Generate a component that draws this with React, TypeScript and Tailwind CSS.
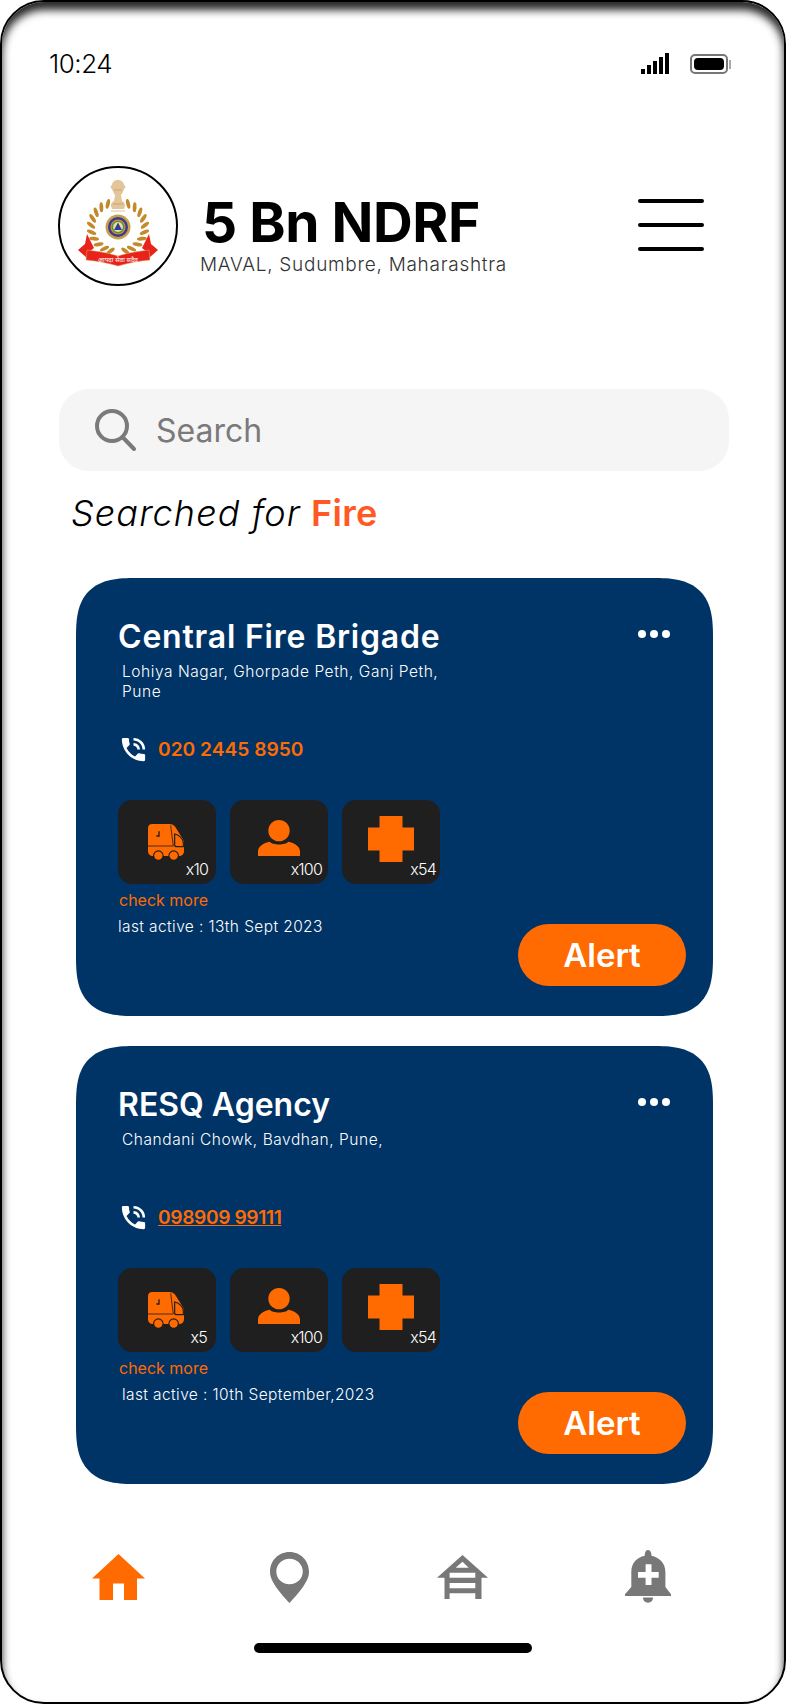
import React from "react";
import { MdPhoneInTalk } from "react-icons/md";

const leafAngles = [112, 128, 144, 160, 176, 192, 208, 224, 240, 254];

function Emblem() {
  return (
    <svg width="116" height="116" viewBox="2 2 116 116">
      <path d="M54 19c0-3 3-5 6-5s6 2 6 5c2 1 2 3 0 4-1 3-2 5-3 6l1 6c2 1 3 2 3 5l-1 3H54l-1-3c0-3 1-4 3-5l1-6c-1-1-2-3-3-6-2-1-2-3 0-4z" fill="#e2c598" />
      <path d="M56 24h8M55 38h10" stroke="#c9a46e" strokeWidth="1" fill="none" />
      <path d="M53 45h14" stroke="#cdb48c" strokeWidth="0.8" />
      {leafAngles.map((deg) => {
        const a = (deg * Math.PI) / 180;
        const x = 60 + 27 * Math.cos(a);
        const y = 61 - 25 * Math.sin(a);
        const rot = 90 - deg + 35;
        return (
          <g key={deg}>
            <ellipse cx={x} cy={y} rx="1.9" ry="5" fill="#c28a2a" transform={`rotate(${rot} ${x} ${y})`} />
            <ellipse cx={120 - x} cy={y} rx="1.9" ry="5" fill="#c28a2a" transform={`rotate(${-rot} ${120 - x} ${y})`} />
          </g>
        );
      })}
      <circle cx="60" cy="61" r="12.500" fill="#c9a04a" />
      <circle cx="60" cy="61" r="10" fill="#333d96" />
      <circle cx="60" cy="61" r="7.600" fill="#e8862a" />
      <circle cx="60" cy="61" r="6.300" fill="#3c9a4a" />
      <circle cx="60" cy="61" r="4.900" fill="#f3d9a0" />
      <path d="M60 56.500l4 7.500h-8z" fill="#2f3f96" />
      <path d="M20 84l7-6 2-10 7 14-5 4 1 8c-5-3-8-7-12-10z" fill="#e8231c" />
      <path d="M100 84l-7-6-2-10-7 14 5 4-1 8c5-3 8-7 12-10z" fill="#e8231c" />
      <path d="M29 84c9 1 22 3 31 6 9-3 22-5 31-6l1 10c-11 1-22 3-32 6-10-3-21-5-32-6z" fill="#e8231c" stroke="#d8b36a" strokeWidth="0.5" />
      <text x="60" y="96" textAnchor="middle" fontSize="6.500" fill="#fff" fontFamily="'Noto Sans',sans-serif">आपदा सेवा सदैव</text>
    </svg>
  );
}

function Truck() {
  return (
    <svg width="36" height="36" viewBox="0 0 108 108">
      <path d="M12 0h52c8 0 14 3 18 9l22 35c3 4 4 9 4 14v24c0 8-5 13-12 14H12C5 96 0 90 0 82V12C0 5 5 0 12 0z" fill="#ff6b00" />
      <path d="M0 66h76L68 4" fill="none" stroke="#1f1f1f" strokeWidth="2.500" />
      <path d="M80 30c12 2 26 14 26 26v12H86c-4 0-6-3-6-6z" fill="#ff6b00" stroke="#1f1f1f" strokeWidth="3.500" />
      <path d="M33 22v14h-8" fill="none" stroke="#1f1f1f" strokeWidth="4" />
      <circle cx="31" cy="95" r="16" fill="#1f1f1f" />
      <circle cx="77" cy="95" r="16" fill="#1f1f1f" />
      <circle cx="31" cy="95" r="12.500" fill="#ff6b00" />
      <circle cx="77" cy="95" r="12.500" fill="#ff6b00" />
    </svg>
  );
}

function Person() {
  return (
    <svg width="42" height="36" viewBox="0 0 126 108" fill="#ff6b00">
      <circle cx="63" cy="32" r="32" />
      <path d="M0 108V94C0 80 16 68 36 65c6 11 48 11 54 0 20 3 36 15 36 29v14z" />
    </svg>
  );
}

function Cross() {
  return (
    <svg width="46" height="46" viewBox="0 0 46 46" fill="#ff6b00">
      <path d="M11.500 0h23v11.500H46v23H34.500V46h-23V34.500H0v-23h11.500z" />
    </svg>
  );
}

function Tile({ pad, icon, label, labelClass }: { pad: string; icon: React.ReactNode; label: string; labelClass: string }) {
  return (
    <div className={`relative h-[84px] w-[98px] rounded-[14px] bg-[#1f1f1f] ${pad}`}>
      {icon}
      <span className={`absolute bottom-[4px] text-[16px] leading-[22px] font-light tracking-[-0.8px] text-white ${labelClass}`}>{label}</span>
    </div>
  );
}

function Card({
  title,
  titleClass,
  address,
  phone,
  phoneClass,
  count,
  countClass,
  active,
  activeClass,
}: {
  title: string;
  titleClass: string;
  address: string[];
  phone: string;
  phoneClass: string;
  count: string;
  countClass: string;
  active: string;
  activeClass: string;
}) {
  return (
    <div className="flex h-[438px] w-[637px] flex-col rounded-[60px] bg-[#003366] pr-[27px] pb-[30px] pl-[42px] [corner-shape:superellipse(1.5)]">
      <div className="mt-[30px] flex h-[58px] items-center justify-between">
        <div className={`text-[32px] leading-[40px] font-semibold text-white ${titleClass}`}>{title}</div>
        <div className="mr-[16px] -mt-[6px] flex gap-[4px]">
          <span className="h-[8px] w-[8px] rounded-full bg-white" />
          <span className="h-[8px] w-[8px] rounded-full bg-white" />
          <span className="h-[8px] w-[8px] rounded-full bg-white" />
        </div>
      </div>
      <div className="-mt-[4px] ml-[4px] h-[40px] text-[15.5px] leading-[20px] font-light tracking-[0.55px] text-white">
        {address.map((a) => (
          <div key={a}>{a}</div>
        ))}
      </div>
      <div className="mt-[31px] flex h-[32px] items-center">
        <MdPhoneInTalk className="text-white" size={31} />
        <span className={`ml-[9px] text-[19.2px] leading-[28px] font-semibold text-[#ff6b00] ${phoneClass}`}>{phone}</span>
      </div>
      <div className="mt-[35px] flex flex-1 justify-between">
        <div className="flex flex-col">
          <div className="flex gap-[14px]">
            <Tile pad="pl-[30px] pt-[24px]" icon={<Truck />} label={count} labelClass={countClass} />
            <Tile pad="pl-[28px] pt-[20px]" icon={<Person />} label="x100" labelClass="right-[6px]" />
            <Tile pad="pl-[26px] pt-[16px]" icon={<Cross />} label="x54" labelClass="right-[4px]" />
          </div>
          <div className="mt-[5px] ml-[1px] text-[16px] leading-[22px] font-normal text-[#ff6b00]">check more</div>
          <div className={`mt-[5px] text-[15.5px] leading-[22px] font-light tracking-[0.4px] text-white ${activeClass}`}>{active}</div>
        </div>
        <button className="mt-auto h-[62px] w-[168px] rounded-full bg-[#ff6b00] text-[33px] leading-[40px] font-semibold text-white">Alert</button>
      </div>
    </div>
  );
}

export default function App() {
  return (
    <div className="relative flex h-[1704px] w-[786px] flex-col overflow-hidden rounded-[44px] border-2 border-black bg-white font-['Inter',sans-serif] text-black shadow-[inset_0_8px_8px_rgba(0,0,0,0.85)]">
      <div className="mt-[46px] flex h-[32px] items-center pl-[47px]">
        <span className="text-[26px] leading-[32px] font-light tracking-[-0.5px]">10:24</span>
        <div className="ml-auto flex h-[20px] items-end gap-[2px]">
          <span className="h-[5px] w-[4px] bg-black" />
          <span className="h-[9px] w-[4px] bg-black" />
          <span className="h-[13px] w-[4px] bg-black" />
          <span className="h-[17px] w-[4px] bg-black" />
          <span className="h-[21px] w-[4px] bg-black" />
        </div>
        <div className="mr-[53px] ml-[21px] flex items-center">
          <div className="flex h-[20px] w-[38px] items-center rounded-[5px] border-2 border-[#777] p-[2px]">
            <div className="h-full w-full rounded-[4px] bg-black" />
          </div>
          <div className="ml-[1px] h-[9px] w-[2px] bg-[#aaa]" />
        </div>
      </div>

      <div className="mt-[86px] flex h-[120px] items-start pl-[56px]">
        <div className="flex h-[120px] w-[120px] items-center justify-center rounded-full border-2 border-black">
          <Emblem />
        </div>
        <div className="mt-[26px] ml-[22px]">
          <div className="ml-[2px] h-[60px] text-[55px] leading-[60px] font-bold tracking-[-0.45px]">5 Bn NDRF</div>
          <div className="-mt-[1px] text-[19px] leading-[28px] font-light tracking-[0.72px] text-[#333]">MAVAL, Sudumbre, Maharashtra</div>
        </div>
        <div className="mt-[33px] mr-[80px] ml-auto flex flex-col gap-[20px]">
          <span className="h-[4px] w-[66px] rounded-full bg-black" />
          <span className="h-[4px] w-[66px] rounded-full bg-black" />
          <span className="h-[4px] w-[66px] rounded-full bg-black" />
        </div>
      </div>

      <div className="mt-[103px] mr-[55px] ml-[57px] flex h-[82px] items-center rounded-[30px] bg-[#f5f5f5] pl-[36px]">
        <svg width="42" height="42" viewBox="0 0 42 42" fill="none" stroke="#7a7a7a" strokeWidth="4">
          <circle cx="17" cy="17" r="15" />
          <path d="M27.500 28L39 40" strokeLinecap="round" />
        </svg>
        <span className="mt-[2px] ml-[19px] text-[32px] leading-[40px] text-[#7a7a7a]">Search</span>
      </div>

      <div className="mt-[21px] ml-[69px] h-[42px] text-[36px] leading-[42px] font-light whitespace-nowrap">
        <span className="tracking-[1.1px] italic">Searched for </span>
        <span className="-ml-[1px] font-semibold tracking-[0.3px] text-[#ff5a24]">Fire</span>
      </div>

      <div className="mt-[44px] ml-[74px] flex flex-col gap-[30px]">
        <Card
          title="Central Fire Brigade"
          titleClass="tracking-[0.8px]"
          address={["Lohiya Nagar, Ghorpade Peth, Ganj Peth,", "Pune"]}
          phone="020 2445 8950"
          phoneClass=""
          count="x10"
          countClass="right-[8px]"
          active="last active : 13th Sept 2023"
          activeClass=""
        />
        <Card
          title="RESQ Agency"
          titleClass="tracking-[0px]"
          address={["Chandani Chowk, Bavdhan, Pune,"]}
          phone="098909 99111"
          phoneClass="underline tracking-[-0.4px]"
          count="x5"
          countClass="right-[9px]"
          active="last active : 10th September,2023"
          activeClass="ml-[4px]"
        />
      </div>

      <div className="mt-[66px] flex h-[54px] items-center pl-[90px]">
        <svg width="53" height="46" viewBox="0 0 53 46" fill="#ff6b00">
          <path d="M26.500 0L53 24.500H45V46H32V29.500H21V46H7.500V24.500H0Z" />
        </svg>
        <svg className="ml-[125px]" width="39" height="51" viewBox="0 0 39 51" fill="#787878">
          <path fillRule="evenodd" d="M19.500 0C31 0 39 9 39 20C39 30 27 43 19.500 51C12 43 0 30 0 20C0 9 8 0 19.500 0ZM19.500 6.700C12 6.700 6.300 12.500 6.300 19.500C6.300 26.500 12 32.300 19.500 32.300C27 32.300 32.800 26.500 32.800 19.500C32.800 12.500 27 6.700 19.500 6.700Z" />
        </svg>
        <svg className="ml-[128px]" width="51" height="44" viewBox="0 0 51 44" fill="#787878">
          <path fillRule="evenodd" d="M25.500 0L51 22.700H44.500V44H38.300V38.300H12.600V44H7.500V22.700H0ZM25.500 6.700L18.700 12.700H31.700ZM12.600 17.700V22.700H38.300V17.700ZM12.600 28V33.300H38.300V28Z" />
        </svg>
        <svg className="-mt-[2px] ml-[137px]" width="46" height="53" viewBox="0 0 46 53" fill="#787878">
          <path fillRule="evenodd" d="M23 0C25 0 26.500 2 26.500 5.800C34 7.500 40.400 13 40.400 22V37L46 44.300V46H0V44.300L6.300 37V22C6.300 13 12 7.500 19.700 5.800C19.700 2 21 0 23 0ZM20.600 14.300V22H13V27.700H20.600V35H26.500V27.700H33.700V22H26.500V14.300Z" />
          <path d="M18 47.500H28C28 50.500 26 52.700 23 52.700C20 52.700 18 50.500 18 47.500Z" />
        </svg>
      </div>

      <div className="mt-[39px] ml-[252px] h-[10px] w-[278px] rounded-full bg-black" />
    </div>
  );
}
